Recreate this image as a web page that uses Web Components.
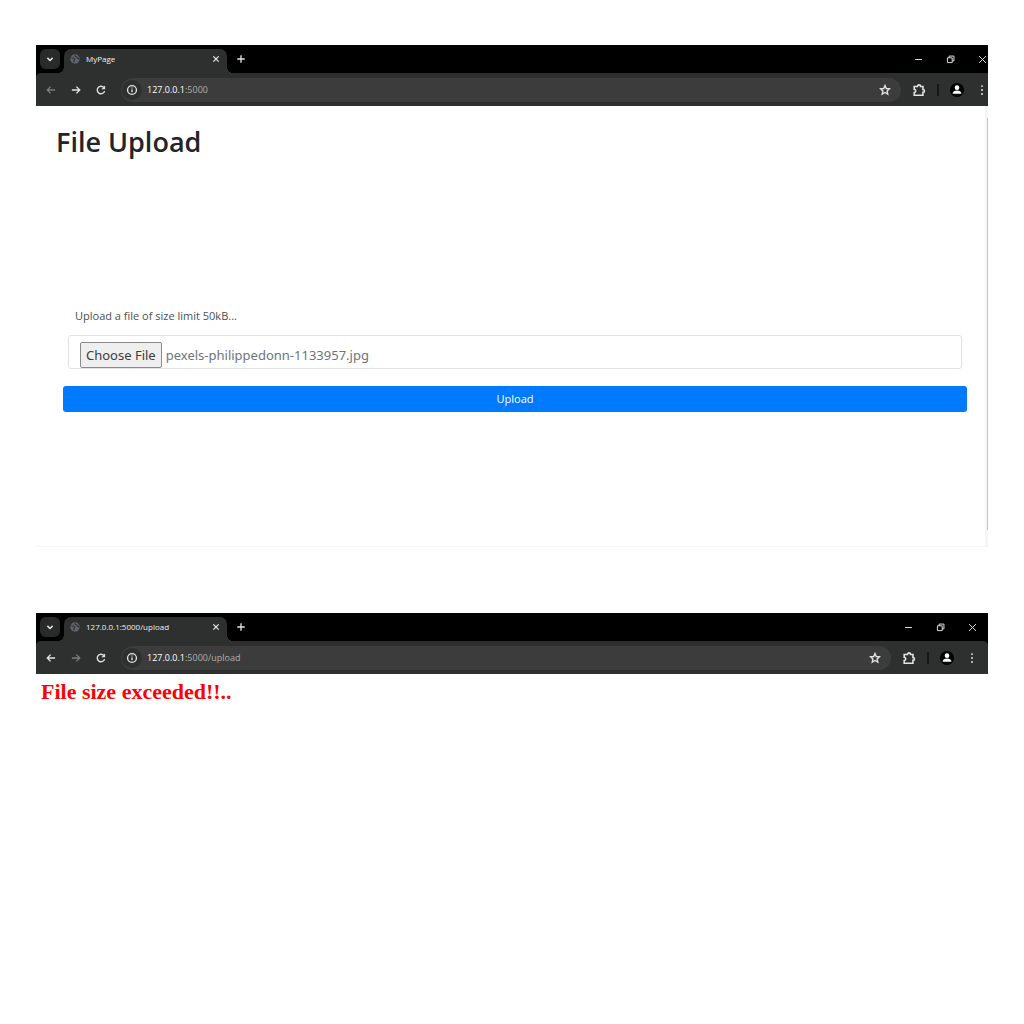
<!DOCTYPE html>
<html lang="en">
<head>
<meta charset="utf-8">
<meta name="viewport" content="width=device-width, initial-scale=1">
<title>File Upload</title>
<style>
  body {
    margin: 0;
    padding: 45px 36px;
    display: flex;
    flex-direction: column;
    gap: 66px;
    background: #fff;
    font-family: "Open Sans", "Noto Sans", sans-serif;
  }
</style>
</head>
<body>
  <browser-window tab-title="MyPage" host="127.0.0.1" path=":5000" history="forward" scrollbar>
    <upload-form file-name="pexels-philippedonn-1133957.jpg"></upload-form>
  </browser-window>

  <browser-window tab-title="127.0.0.1:5000/upload" host="127.0.0.1" path=":5000/upload" history="back">
    <upload-error>File size exceeded!!..</upload-error>
  </browser-window>

<script>
const icons = {
  chevron: '<path d="M4.500 6.500 8 10l3.500-3.500"/>',
  close: '<path d="m4.500 4.500 7 7m0-7-7 7"/>',
  plus: '<path d="M8 3v10M3 8h10"/>',
  back: '<path d="M13.500 8H3.200M7.500 3.500 3 8l4.500 4.500"/>',
  forward: '<path d="M2.500 8h10.300M8.500 3.500 13 8l-4.500 4.500"/>',
  reload: '<path d="M12.800 9.500A5 5 0 1 1 11.800 4.700"/><path d="M13.500 2v5H8.500z" fill="currentColor" stroke="none"/>',
  info: '<circle cx="8" cy="8" r="5.900"/><path d="M8 7.300v3.700M8 4.500v1.500"/>',
  star: '<path d="m8 2 1.700 4 4.300.4-3.200 2.900.9 4.300L8 11.300l-3.700 2.300.9-4.300L2 6.400 6.300 6z"/>',
  puzzle: '<path d="M2.500 4h3.700c0-2.500 3.600-2.500 3.600 0h2.700v3.500c2.300 0 2.300 3.200 0 3.200V14h-10v-3.200c2.300 0 2.300-3.600 0-3.600z"/>',
  dots: '<g fill="currentColor" stroke="none"><circle cx="8" cy="2.800" r="1.300"/><circle cx="8" cy="8" r="1.300"/><circle cx="8" cy="13.200" r="1.300"/></g>',
  user: '<g stroke="none"><circle cx="8" cy="8" r="8" fill="#000"/><circle cx="8" cy="5.300" r="2.700" fill="#fff"/><path d="M3 12.200c0-5 10-5 10 0z" fill="#fff"/></g>',
  globe: '<circle cx="8" cy="8" r="7.500" fill="#60666b" stroke="none"/><path d="M2 6c2.500-.5 3 1 4.500 1.500s1 2 .2 3-.7 2-.7 3M8.500 1.500c-1 2 0 3 1.500 3s1 2.500 2.500 2.500 2 1.500 2 1.500" stroke="#2e2f2f"/>',
  minimize: '<path d="M3 8h10"/>',
  restore: '<path d="M3.500 5.500h7v7h-7zM6 5.500v-2.500h7V10h-2.500"/>',
  quit: '<path d="m3 3 10 10m0-10L3 13"/>'
};

class UiIcon extends HTMLElement {
  constructor() {
    super();
    this.attachShadow({ mode: 'open' });
  }

  connectedCallback() {
    this.shadowRoot.innerHTML = `
    <style>
      :host {
        display: block;
        flex: none;
        width: var(--icon-size, 12px);
        height: var(--icon-size, 12px);
      }

      svg {
        display: block;
        width: 100%;
        height: 100%;
        fill: none;
        stroke: currentColor;
        stroke-width: var(--icon-stroke, 1.8);
      }
    </style>
    <svg viewBox="0 0 16 16" aria-hidden="true">${icons[this.getAttribute('name')]}</svg>
    `;
  }
}

class BrowserWindow extends HTMLElement {
  constructor() {
    super();
    this.attachShadow({ mode: 'open' });
  }

  connectedCallback() {
    this.render();
  }

  render() {
    const title = this.getAttribute('tab-title');
    const history = this.getAttribute('history');

    this.shadowRoot.innerHTML = `
    <style>
      :host {
        display: block;
        overflow: hidden;
      }

      /* the taller window runs a little past its right edge */
      :host([scrollbar]) .chrome {
        margin-right: -10px;
      }

      button {
        display: flex;
        flex: none;
        align-items: center;
        justify-content: center;
        width: 20px;
        height: 20px;
        margin: 0;
        padding: 0;
        border: 0;
        border-radius: 6px;
        background: none;
        color: #e3e3e3;
      }

      button:disabled {
        color: #7b7b7b;
      }

      .strip {
        display: flex;
        align-items: center;
        height: 28px;
        padding: 0 6px 0 4px;
        background: #000;
      }

      .search {
        background: #292a2a;
      }

      .tab {
        position: relative;
        display: flex;
        align-items: center;
        align-self: flex-end;
        box-sizing: border-box;
        width: 163px;
        height: 24px;
        margin: 0 4px;
        padding: 0 1px 4px 6px;
        border-radius: 7px 7px 0 0;
        background: #2e2f2f;
        color: #f1f1f1;
        font-size: 8px;
        line-height: 12px;
      }

      .tab::before,
      .tab::after {
        content: "";
        position: absolute;
        bottom: 0;
        width: 6px;
        height: 6px;
      }

      .tab::before {
        right: 100%;
        background: radial-gradient(circle at 0 0, #000 6px, #2e2f2f 6px);
      }

      .tab::after {
        left: 100%;
        background: radial-gradient(circle at 100% 0, #000 6px, #2e2f2f 6px);
      }

      .tab span {
        flex: 1;
        margin-left: 6px;
        white-space: nowrap;
      }

      .tab > ui-icon {
        --icon-size: 10px;
      }

      .controls {
        display: flex;
        gap: 12px;
        margin-left: auto;
      }

      .controls ui-icon {
        --icon-size: 11px;
        --icon-stroke: 1.4;
      }

      .toolbar {
        display: flex;
        align-items: center;
        height: 33px;
        padding: 0 6px 0 5px;
        border-radius: 5px 5px 0 0;
        background: #2e2f2f;
      }

      .under {
        background: #000;
      }

      .nav {
        display: flex;
        gap: 5px;
      }

      .address {
        display: flex;
        flex: 1;
        align-items: center;
        height: 24px;
        margin: 0 8px 0 10px;
        padding: 0 6px 0 1px;
        border-radius: 12px;
        background: #3c3c3c;
        color: #fff;
        font-size: 9px;
        line-height: 16px;
      }

      .address button:first-child {
        border-radius: 50%;
        background: #2e2f2f;
      }

      .address label {
        display: flex;
        flex: 1;
        margin-left: 5px;
      }

      .address input {
        flex: 1;
        min-width: 0;
        margin: 0;
        padding: 0;
        border: 0;
        outline: 0;
        background: none;
        color: #b0b0b0;
        font: inherit;
      }

      .divider {
        width: 2px;
        height: 12px;
        margin: 0 8px;
        background: #161616;
      }

      .menu {
        margin-left: 5px;
      }

      .page {
        display: flex;
      }

      ::slotted(*) {
        flex: 1;
      }

      .scroll {
        display: none;
        width: 3px;
        background: #f6f6f6;
      }

      :host([scrollbar]) .page {
        border-bottom: 1px solid #f6f6f6;
      }

      :host([scrollbar]) .scroll {
        display: flex;
        justify-content: flex-end;
        padding: 12px 0 16px;
        box-sizing: border-box;
      }

      .thumb {
        width: 1px;
        background: #c4c4c4;
      }
    </style>
    <div class="chrome">
      <div class="strip">
        <button class="search" aria-label="Search tabs"><ui-icon name="chevron" style="--icon-stroke: 2"></ui-icon></button>
        <div class="tab">
          <ui-icon name="globe"></ui-icon>
          <span>${title}</span>
          <button aria-label="Close tab"><ui-icon name="close"></ui-icon></button>
        </div>
        <button aria-label="New tab"><ui-icon name="plus"></ui-icon></button>
        <div class="controls">
          <button aria-label="Minimize"><ui-icon name="minimize"></ui-icon></button>
          <button aria-label="Restore"><ui-icon name="restore"></ui-icon></button>
          <button aria-label="Close"><ui-icon name="quit"></ui-icon></button>
        </div>
      </div>
      <div class="under">
        <div class="toolbar">
          <div class="nav">
            <button aria-label="Back" ${history === 'back' ? '' : 'disabled'}><ui-icon name="back"></ui-icon></button>
            <button aria-label="Forward" ${history === 'forward' ? '' : 'disabled'}><ui-icon name="forward"></ui-icon></button>
            <button aria-label="Reload"><ui-icon name="reload"></ui-icon></button>
          </div>
          <div class="address">
            <button aria-label="Site information"><ui-icon name="info"></ui-icon></button>
            <label>
              <span>${this.getAttribute('host')}</span>
              <input type="text" aria-label="Address" value="${this.getAttribute('path')}">
            </label>
            <button aria-label="Bookmark"><ui-icon name="star"></ui-icon></button>
          </div>
          <button aria-label="Extensions"><ui-icon name="puzzle" style="--icon-size: 14px"></ui-icon></button>
          <span class="divider"></span>
          <button aria-label="Profile"><ui-icon name="user" style="--icon-size: 14px"></ui-icon></button>
          <button class="menu" aria-label="Menu"><ui-icon name="dots"></ui-icon></button>
        </div>
      </div>
    </div>
    <div class="page">
      <slot></slot>
      <div class="scroll"><div class="thumb"></div></div>
    </div>
    `;
  }
}

class UploadForm extends HTMLElement {
  constructor() {
    super();
    this.attachShadow({ mode: 'open' });
  }

  connectedCallback() {
    this.render();
    this.addEventListeners();
  }

  render() {
    this.shadowRoot.innerHTML = `
    <style>
      :host {
        display: block;
        padding: 18px 18px 134px 20px;
        color: #212529;
      }

      h1 {
        margin: 0 0 147px;
        font-size: 27px;
        font-weight: 600;
        line-height: 36px;
      }

      form {
        display: flex;
        flex-direction: column;
        margin-left: 7px;
      }

      .caption {
        margin-left: 12px;
        font-size: 11px;
        line-height: 18px;
        color: #495057;
      }

      .field {
        display: flex;
        align-items: center;
        gap: 4px;
        box-sizing: border-box;
        height: 34px;
        margin: 10px 5px 17px;
        padding: 5px 11px 0;
        border: 1px solid #dee2e6;
        border-radius: 3px;
        color: #6c757d;
        font-family: "Noto Sans", "Open Sans", sans-serif;
        font-size: 13px;
        line-height: 18px;
      }

      .field input {
        position: absolute;
        width: 1px;
        height: 1px;
        opacity: 0;
      }

      .choose {
        height: 26px;
        margin: 0;
        padding: 0 5px;
        border: 1px solid #8a8a8a;
        border-radius: 2px;
        background: #efefef;
        color: #3c3c3c;
        font: inherit;
      }

      .submit {
        height: 26px;
        margin: 0;
        border: 0;
        border-radius: 3px;
        background: #007bff;
        color: #fff;
        font-family: inherit;
        font-size: 11px;
        line-height: 18px;
      }
    </style>
    <h1>File Upload</h1>
    <form>
      <label class="caption" for="file">Upload a file of size limit 50kB...</label>
      <div class="field">
        <input id="file" type="file" tabindex="-1">
        <button class="choose" type="button">Choose File</button>
        <span class="name">${this.getAttribute('file-name')}</span>
      </div>
      <button class="submit" type="submit">Upload</button>
    </form>
    `;
  }

  addEventListeners() {
    const input = this.shadowRoot.querySelector('#file');
    const name = this.shadowRoot.querySelector('.name');

    this.shadowRoot.querySelector('.choose').addEventListener('click', () => input.click());

    input.addEventListener('change', () => {
      name.textContent = input.files.length ? input.files[0].name : 'No file chosen';
    });

    this.shadowRoot.querySelector('form').addEventListener('submit', (e) => e.preventDefault());
  }
}

class UploadError extends HTMLElement {
  constructor() {
    super();
    this.attachShadow({ mode: 'open' });
    this.shadowRoot.innerHTML = `
    <style>
      :host {
        display: block;
        padding: 5px;
      }

      h1 {
        margin: 0;
        color: #f00;
        font-family: "Liberation Serif", serif;
        font-size: 22px;
        font-weight: 700;
        line-height: 26px;
      }
    </style>
    <h1><slot></slot></h1>
    `;
  }
}

customElements.define('ui-icon', UiIcon);
customElements.define('browser-window', BrowserWindow);
customElements.define('upload-form', UploadForm);
customElements.define('upload-error', UploadError);
</script>
</body>
</html>
